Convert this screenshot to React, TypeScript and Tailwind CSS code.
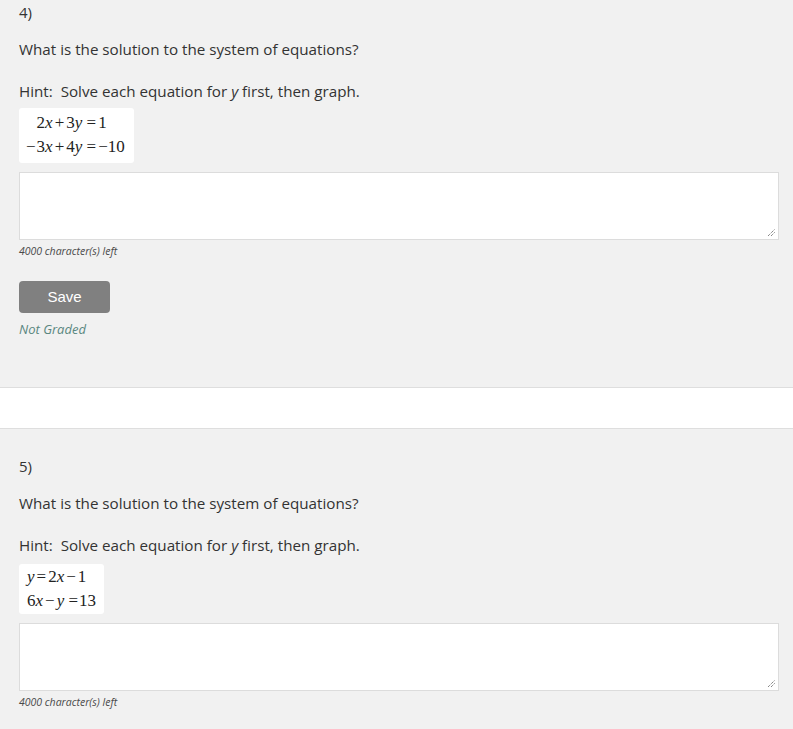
import React from "react";

const sans = { fontFamily: '"Open Sans", "Liberation Sans", sans-serif' };
const serif = { fontFamily: '"Liberation Serif", "Times New Roman", serif' };

function V({ children }: { children: React.ReactNode }) {
  return <i>{children}</i>;
}

function Op({ children }: { children: React.ReactNode }) {
  return <span className="mx-[2px]">{children}</span>;
}

function Resizer() {
  return (
    <svg className="absolute right-[2px] bottom-[2px]" width="9" height="9" viewBox="0 0 9 9">
      <line x1="1" y1="8" x2="8" y2="1" stroke="#555" strokeWidth="1" strokeDasharray="1 1" />
      <line x1="4" y1="8" x2="8" y2="4" stroke="#555" strokeWidth="1" strokeDasharray="1 1" />
    </svg>
  );
}

function Answer() {
  return (
    <div className="relative w-[760px] h-[68px] bg-white border border-[#dcdcdc]">
      <Resizer />
    </div>
  );
}

export default function App() {
  return (
    <div className="w-[793px] h-[729px] overflow-hidden bg-[#f1f1f1] text-[#333]" style={sans}>
      <div className="pl-[19px] pt-[2px] h-[387px]">
        <div className="text-[15px] leading-[20px]">4)</div>
        <div className="text-[15.2px] leading-[20px] mt-[17px]">What is the solution to the system of equations?</div>
        <div className="text-[15.2px] leading-[20px] mt-[22px]">
          Hint:&nbsp; Solve each equation for <i>y</i> first, then graph.
        </div>
        <div className="mt-[7px] w-[115px] h-[55px] bg-white rounded-[3px] pt-[3px]" style={serif}>
          <div className="grid grid-cols-[auto_auto] w-fit pl-[7px] text-[17px] leading-[24px] text-[#222]">
            <div className="text-right">2<V>x</V><Op>+</Op>3<V>y</V>&nbsp;</div>
            <div><span className="mr-[2px]">=</span>1</div>
            <div className="text-right"><span className="mr-[1px]">−</span>3<V>x</V><Op>+</Op>4<V>y</V>&nbsp;</div>
            <div><span className="mr-[2px]">=</span>−10</div>
          </div>
        </div>
        <div className="mt-[9px]">
          <Answer />
        </div>
        <div className="text-[10.5px] italic leading-[14px] mt-[4px] text-[#4a4a4a]">4000 character(s) left</div>
        <button
          className="mt-[23px] w-[91px] h-[32px] bg-[#808080] rounded-[4px] text-white text-[15px]"
          style={{ fontFamily: '"Liberation Sans", Arial, sans-serif' }}
        >
          Save
        </button>
        <div className="text-[13px] italic leading-[18px] mt-[7px] text-[#5a8780]">Not Graded</div>
      </div>
      <div className="h-[42px] bg-white border-y border-[#dedede]"></div>
      <div className="pl-[19px] pt-[27px]">
        <div className="text-[15px] leading-[20px]">5)</div>
        <div className="text-[15.2px] leading-[20px] mt-[17px]">What is the solution to the system of equations?</div>
        <div className="text-[15.2px] leading-[20px] mt-[22px]">
          Hint:&nbsp; Solve each equation for <i>y</i> first, then graph.
        </div>
        <div className="mt-[9px] w-[85px] h-[50px] bg-white rounded-[3px] pt-[1px] pl-[8px] text-[17px] leading-[24px] text-[#222]" style={serif}>
          <div><V>y</V><Op>=</Op>2<V>x</V><Op>−</Op>1</div>
          <div>6<V>x</V><Op>−</Op><V>y</V>&nbsp;<span className="mr-[1px]">=</span>13</div>
        </div>
        <div className="mt-[9px]">
          <Answer />
        </div>
        <div className="text-[10.5px] italic leading-[14px] mt-[4px] text-[#4a4a4a]">4000 character(s) left</div>
      </div>
    </div>
  );
}
